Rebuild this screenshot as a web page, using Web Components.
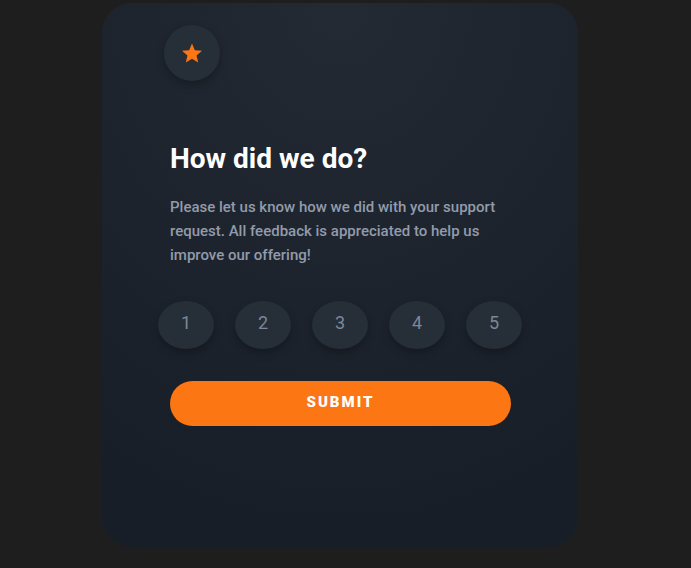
<!DOCTYPE html>
<html lang="en">
<head>
<meta charset="utf-8">
<meta name="viewport" content="width=device-width, initial-scale=1">
<title>Interactive rating</title>
<style>
html{background:#1e1e1e}
body{margin:0;padding:3px 11px 20px 0;box-sizing:border-box;min-height:100vh;font-family:Roboto,"Liberation Sans",sans-serif;color:#fff}
</style>
</head>
<body>
<rating-card>
  <star-badge slot="badge"></star-badge>
  <span slot="title">How did we do?</span>
  <span slot="text">Please let us know how we did with your support request. All feedback is appreciated to help us improve our offering!</span>
  <rating-scale slot="scale" max="5"></rating-scale>
  <submit-button slot="action">Submit</submit-button>
</rating-card>
<script>
class StarBadge extends HTMLElement{
  constructor(){
    super();
    this.attachShadow({mode:"open"}).innerHTML=`
<style>
:host{display:grid;place-items:center;width:56px;height:56px;border-radius:50%;background:#262e38;box-shadow:0 4px 10px #0004}
svg{display:block;width:20px;height:20px}
</style>
<svg viewBox="0 0 20 20" aria-hidden="true"><path fill="#fc7614" d="M10 15.8 16.18 19.5 14.54 12.5 20 7.75 12.81 7.14 10 .5 7.19 7.14 0 7.75 5.46 12.5 3.82 19.5z"/></svg>`;
  }
}
class RatingScale extends HTMLElement{
  connectedCallback(){
    if(this.shadowRoot)return;
    const max=Number(this.getAttribute("max"))||5;
    const options=Array.from({length:max},(_,i)=>`<label><input type="radio" name="rating" value="${i+1}"><span>${i+1}</span></label>`).join("");
    this.attachShadow({mode:"open"}).innerHTML=`
<style>
:host{display:block}
fieldset{display:flex;justify-content:space-between;gap:8px;margin:0;padding:0;border:0;min-width:0}
label{display:grid;place-items:center;width:56px;height:48px;color:#7c8798;font-size:18px;line-height:24px;cursor:pointer}
input,span{grid-area:1/1}
input{appearance:none;width:100%;height:100%;margin:0;border-radius:50%;background:#262e38;box-shadow:0 4px 8px #0004;cursor:pointer}
span{position:relative;pointer-events:none;padding-bottom:4px}
input:hover{background:#fc7614}
input:checked{background:#7c8798}
input:hover+span,input:checked+span{color:#fff}
</style>
<fieldset aria-label="Rating">${options}</fieldset>`;
  }
}
class SubmitButton extends HTMLElement{
  constructor(){
    super();
    this.attachShadow({mode:"open"}).innerHTML=`
<style>
:host{display:block}
button{display:block;width:100%;height:45px;padding:0 0 4px;border:0;border-radius:23px;background:#fc7614;color:#fff;font:900 15px/20px Roboto,"Liberation Sans",sans-serif;letter-spacing:2px;text-transform:uppercase;cursor:pointer}
button:hover{background:#fff;color:#fc7614}
</style>
<button type="button"><slot></slot></button>`;
  }
}
class RatingCard extends HTMLElement{
  constructor(){
    super();
    this.attachShadow({mode:"open"}).innerHTML=`
<style>
:host{display:block;box-sizing:border-box;max-width:476px;margin:0 auto;padding:22px 56px 121px;border-radius:30px;background:radial-gradient(99% 99% at 50% 0%,#232a34 0%,#181e27 100%)}
header{padding-left:6px}
.body{padding:60px 12px 0}
h1{margin:0;font-size:28px;font-weight:700;line-height:36px}
p{margin:18px 0 0;color:#929bab;font-size:15px;font-weight:500;line-height:24px}
.scale{margin-top:34px}
.action{margin:32px 11px 0 12px}
</style>
<header><slot name="badge"></slot></header>
<div class="body"><h1><slot name="title"></slot></h1><p><slot name="text"></slot></p></div>
<div class="scale"><slot name="scale"></slot></div>
<div class="action"><slot name="action"></slot></div>`;
  }
}
customElements.define("star-badge",StarBadge);
customElements.define("rating-scale",RatingScale);
customElements.define("submit-button",SubmitButton);
customElements.define("rating-card",RatingCard);
</script>
</body>
</html>
